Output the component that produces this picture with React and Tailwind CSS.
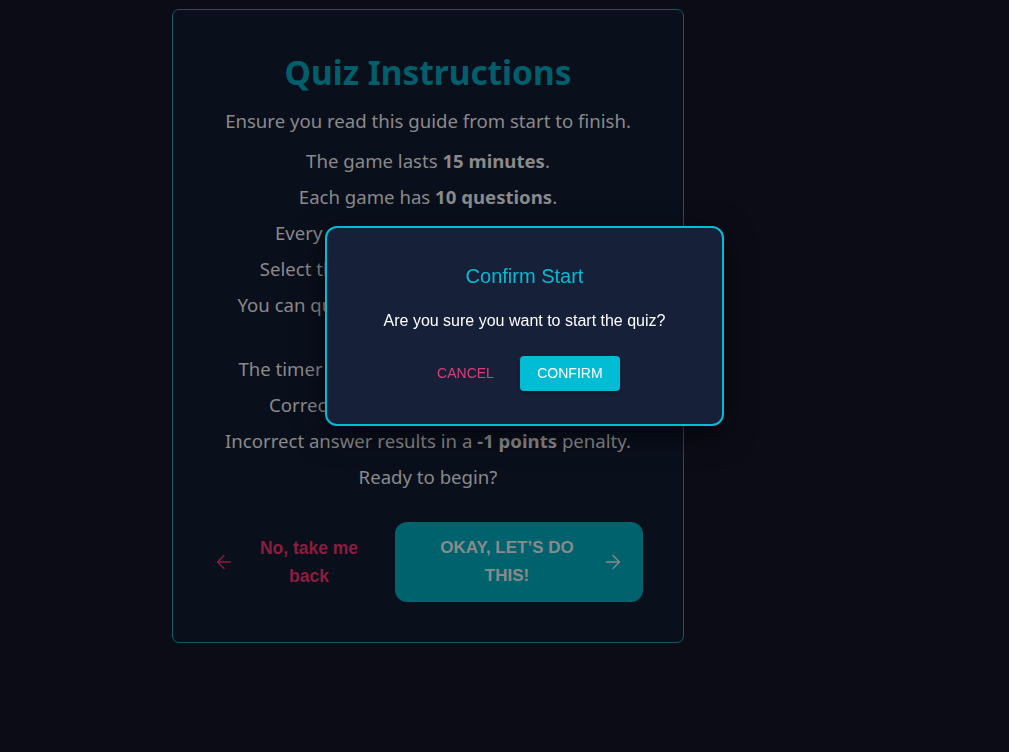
import { ArrowLeft, ArrowRight } from 'lucide-react';

const lines = [
  <>The game lasts <b>15 minutes</b>.</>,
  <>Each game has <b>10 questions</b>.</>,
  <>Every question has <b>4 options</b> each.</>,
  <>Select the correct answer by clicking it.</>,
  <>You can quit the quiz at any point you want.</>,
];

const lines2 = [
  <>The timer starts as soon as the game loads.</>,
  <>Correct answer earns you <b>+4 points</b>.</>,
  <>Incorrect answer results in a <b>-1 points</b> penalty.</>,
  <>Ready to begin?</>,
];

const ConfirmModal = () => (
  <div className="fixed left-[325px] top-[226px] w-[399px] h-[200px] rounded-[12px] border-2 border-[#00bcd4] bg-[#172039] shadow-[0_8px_30px_rgba(0,0,0,0.6)] flex flex-col items-center font-['Liberation_Sans',Arial,sans-serif]">
    <h2 className="mt-[36px] text-[20px] leading-[24px] text-[#00bcd4]">Confirm Start</h2>
    <p className="mt-[23px] text-[16px] leading-[20px] text-white">Are you sure you want to start the quiz?</p>
    <div className="mt-[25px] flex items-center gap-[18px]">
      <button className="px-2 h-[35px] text-[14px] text-[#dc3d78] uppercase">Cancel</button>
      <button className="w-[100px] h-[35px] rounded-[4px] bg-[#00bcd4] text-[14px] text-white uppercase shadow-[0_2px_3px_rgba(0,0,0,0.3)]">Confirm</button>
    </div>
  </div>
);

const App = () => {
  return (
    <div className="min-h-[752px] bg-[#0b0c16] pt-[9px] pl-[172px] font-['Noto_Sans',sans-serif]">
      <div className="w-[512px] h-[634px] rounded-[7px] border border-[#0c5d67] bg-[#0a0f1c] flex flex-col items-center">
        <h1 className="mt-[40px] text-[33.4px] leading-[44px] font-bold text-[#005f6b]">Quiz Instructions</h1>
        <p className="mt-[15px] text-[18.6px] leading-[24px] text-[#8a8a8a]">Ensure you read this guide from start to finish.</p>
        <div className="mt-[16px] flex flex-col items-center gap-[12px] text-[18.6px] leading-[24px] text-[#8a8a8a] whitespace-nowrap">
          {lines.map((l, i) => <p key={i}>{l}</p>)}
        </div>
        <div className="mt-[40px] flex flex-col items-center gap-[12px] text-[18.6px] leading-[24px] text-[#8a8a8a] whitespace-nowrap">
          {lines2.map((l, i) => <p key={i}>{l}</p>)}
        </div>
        <div className="mt-[33px] flex items-center w-full pl-[28px] pr-[40px] font-['Liberation_Sans',Arial,sans-serif] font-bold">
          <button className="flex items-center w-[190px] text-[#8b1d3e]">
            <ArrowLeft size={22} strokeWidth={1.5} className="ml-[12px]" />
            <span className="flex-1 text-[17.5px] leading-[28px] text-center pl-[8px] pr-[16px]">No, take me back</span>
          </button>
          <button className="ml-auto w-[248px] h-[80px] rounded-[12px] bg-[#00626d] flex items-center text-[#8a8a8a] pl-[30px] pr-[19px]">
            <span className="flex-1 text-[17px] leading-[28px] text-center uppercase">Okay, let’s do this!</span>
            <ArrowRight size={22} strokeWidth={1.5} className="ml-[13px]" />
          </button>
        </div>
      </div>
      <ConfirmModal />
    </div>
  );
};

export default App;
